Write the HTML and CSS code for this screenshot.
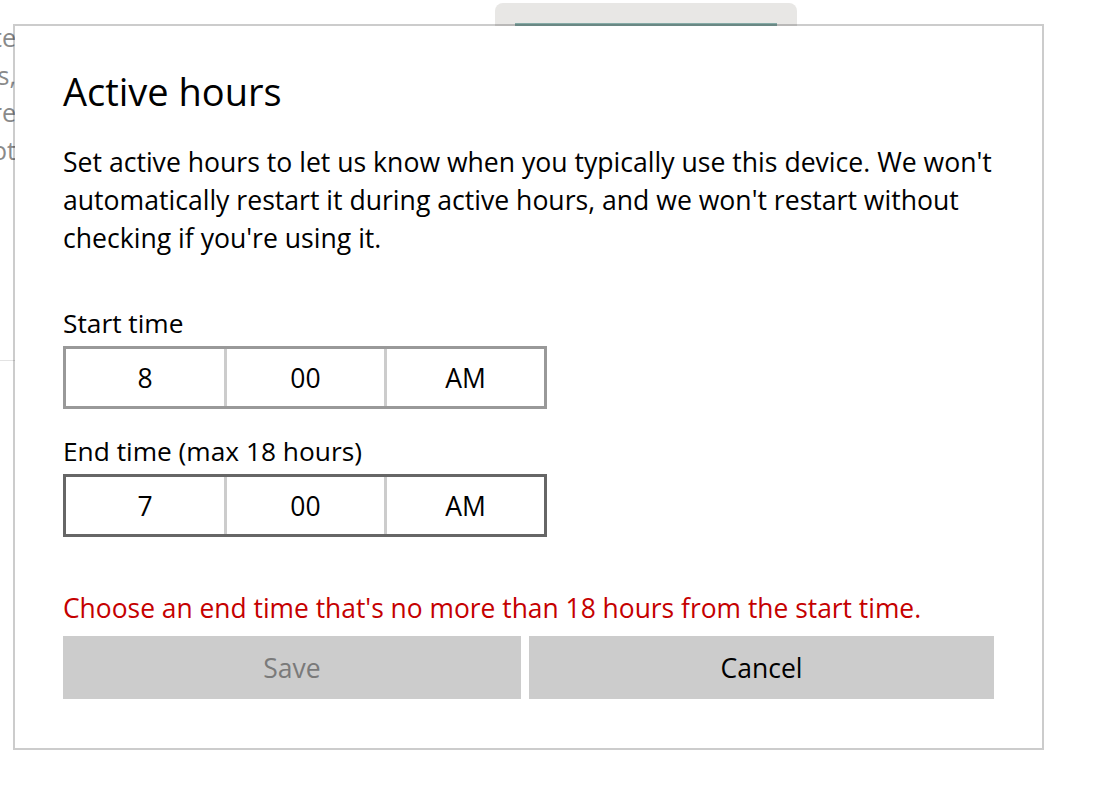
FILE: index.html
```html
<!DOCTYPE html>
<html lang="en">
<head>
<meta charset="utf-8">
<title>Active hours</title>
<link rel="stylesheet" href="styles.css">
</head>
<body>
<div class="page">
  <div class="bg-col">
    <div class="bg-line"><span>complete</span></div>
    <div class="bg-line"><span>updates,</span></div>
    <div class="bg-line"><span>are</span></div>
    <div class="bg-line"><span>not</span></div>
  </div>
  <div class="bg-sep"></div>
  <div class="bg-card"><div class="bg-card-accent"></div></div>

  <div class="dialog" role="dialog" aria-labelledby="dlg-title">
    <h1 class="title" id="dlg-title">Active hours</h1>
    <p class="desc">Set active hours to let us know when you typically use this device. We won't<br>automatically restart it during active hours, and we won't restart without<br>checking if you're using it.</p>

    <div class="field field-start">
      <div class="label">Start time</div>
      <div class="picker">
        <div class="cell">8</div>
        <div class="cell">00</div>
        <div class="cell">AM</div>
      </div>
    </div>

    <div class="field field-end">
      <div class="label">End time (max 18 hours)</div>
      <div class="picker picker-active">
        <div class="cell">7</div>
        <div class="cell">00</div>
        <div class="cell">AM</div>
      </div>
    </div>

    <div class="error">Choose an end time that's no more than 18 hours from the start time.</div>

    <div class="actions">
      <button class="btn btn-disabled" disabled>Save</button>
      <button class="btn">Cancel</button>
    </div>
  </div>
</div>
</body>
</html>
```
FILE: styles.css
```css
html, body {
  margin: 0;
  padding: 0;
  background: #ffffff;
}

body {
  font-family: "Open Sans", "Noto Sans", sans-serif;
  color: #000;
  width: 1106px;
  height: 785px;
  overflow: hidden;
}

.page {
  position: relative;
  width: 1106px;
  height: 785px;
}

/* background settings page, mostly hidden behind the dialog */
.bg-col {
  position: absolute;
  left: 0;
  top: 19px;
  width: 16px;
  overflow: hidden;
  color: #8a8a8a;
  font-size: 25px;
  line-height: 37.5px;
}

.bg-line {
  display: flex;
  justify-content: flex-end;
  white-space: nowrap;
}

.bg-sep {
  position: absolute;
  left: 0;
  top: 360px;
  width: 20px;
  height: 1px;
  background: #e3e3e3;
}

.bg-card {
  position: absolute;
  left: 495px;
  top: 3px;
  width: 302px;
  height: 60px;
  border-radius: 8px;
  background: #e8e7e5;
}

.bg-card-accent {
  margin: 20px 20px 0;
  height: 4px;
  background: #85aaa6;
}

/* dialog */
.dialog {
  position: absolute;
  left: 13px;
  top: 24px;
  width: 1031px;
  height: 726px;
  box-sizing: border-box;
  border: 2px solid rgba(0, 0, 0, 0.2);
  background: #ffffff;
  background-clip: padding-box;
  padding: 39px 48px 0;
  display: flex;
  flex-direction: column;
}

.title {
  margin: 0;
  font-size: 38px;
  line-height: 52px;
  font-weight: 400;
}

.desc {
  margin: 26px 0 0;
  font-size: 26.6px;
  line-height: 38px;
  white-space: nowrap;
}

.label {
  font-size: 26.3px;
  line-height: 30px;
  margin-bottom: 8px;
}

.field-start {
  margin-top: 51px;
}

.field-end {
  margin-top: 27px;
}

.picker {
  width: 484px;
  height: 63px;
  box-sizing: border-box;
  border: 3px solid #999999;
  display: grid;
  grid-template-columns: 158px 160px 160px;
}

.picker-active {
  border-color: #666666;
}

.cell {
  display: flex;
  align-items: center;
  justify-content: center;
  font-size: 26.5px;
}

.cell + .cell {
  border-left: 3px solid #cccccc;
}

.error {
  margin-top: 56px;
  font-size: 26.4px;
  line-height: 30px;
  color: #c50000;
  white-space: nowrap;
}

.actions {
  margin-top: 13px;
  display: grid;
  grid-template-columns: 458px 465px;
  column-gap: 8px;
}

.btn {
  height: 63px;
  border: none;
  background: #cccccc;
  font-family: inherit;
  font-size: 26.5px;
  color: #000;
  padding: 0;
}

.btn-disabled {
  color: #7a7a7a;
}
```
